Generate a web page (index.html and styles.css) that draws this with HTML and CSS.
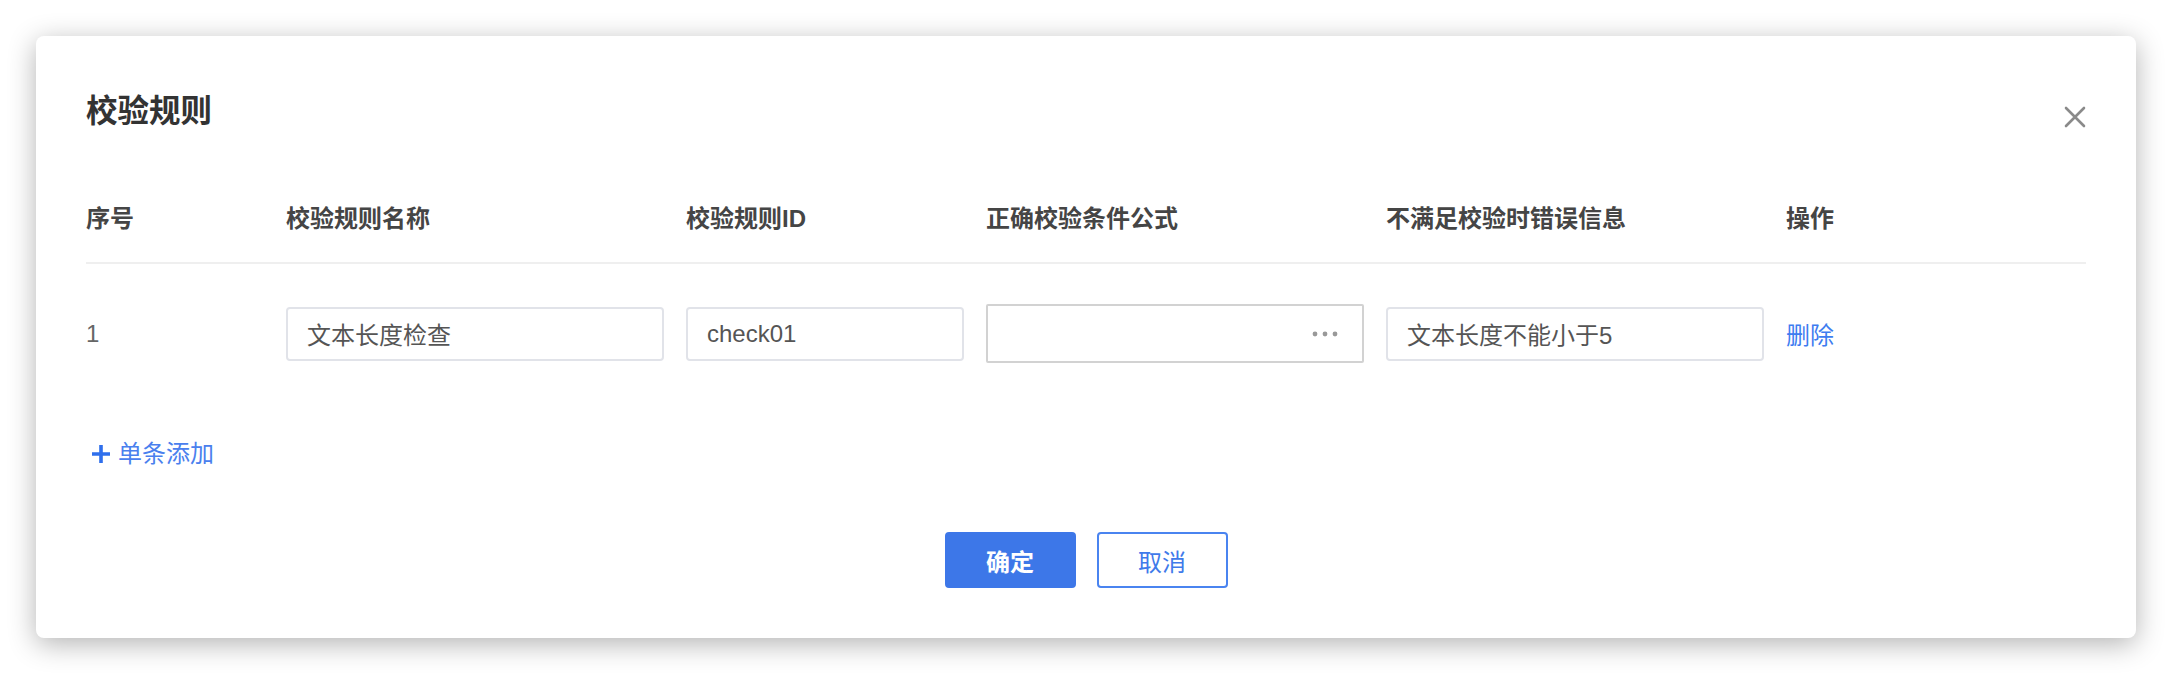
FILE: index.html
```html
<!DOCTYPE html>
<html lang="zh-CN">
<head>
    <meta charset="utf-8">
    <meta name="viewport" content="width=device-width, initial-scale=1">
    <title>校验规则</title>
    <link rel="stylesheet" href="styles.css">
</head>
<body>
    <div class="dialog">
        <div class="dialog-header">
            <h2 class="dialog-title">校验规则</h2>
            <button class="dialog-close" type="button" aria-label="关闭">
                <svg width="22" height="22" viewBox="0 0 22 22"><path d="M2 2L20 20M20 2L2 20" stroke="#8a8a8a" stroke-width="2.6" stroke-linecap="round"/></svg>
            </button>
        </div>

        <div class="rule-table">
            <div class="rule-row rule-head">
                <div>序号</div>
                <div>校验规则名称</div>
                <div>校验规则ID</div>
                <div>正确校验条件公式</div>
                <div>不满足校验时错误信息</div>
                <div>操作</div>
            </div>
            <div class="rule-row rule-body">
                <div class="rule-index">1</div>
                <input class="field" type="text" value="文本长度检查">
                <input class="field" type="text" value="check01">
                <div class="field formula">
                    <svg width="26" height="6" viewBox="0 0 26 6"><circle cx="3" cy="3" r="2.4" fill="#999"/><circle cx="13" cy="3" r="2.4" fill="#999"/><circle cx="23" cy="3" r="2.4" fill="#999"/></svg>
                </div>
                <input class="field" type="text" value="文本长度不能小于5">
                <a class="link" href="#">删除</a>
            </div>
        </div>

        <a class="add-link" href="#">
            <svg width="20" height="20" viewBox="0 0 20 20"><path d="M10 1V19M1 10H19" stroke="#2f6fec" stroke-width="3.6"/></svg>
            <span>单条添加</span>
        </a>

        <div class="dialog-footer">
            <button class="btn btn-primary" type="button">确定</button>
            <button class="btn btn-plain" type="button">取消</button>
        </div>
    </div>
</body>
</html>
```

FILE: styles.css
```css
body {
    margin: 0;
    padding: 36px;
    background-color: #fff;
    font-family: "Liberation Sans", "Noto Sans CJK SC", sans-serif;
    font-size: 24px;
    color: #333;
}
.dialog {
    background: #fff;
    border-radius: 8px;
    box-shadow: 0 6px 28px rgba(0,0,0,0.3);
    padding: 55px 50px 50px 50px;
}
.dialog-header {
    display: flex;
    justify-content: space-between;
    align-items: flex-start;
}
.dialog-title {
    margin: 0;
    font-size: 31.5px;
    line-height: 40px;
    font-weight: bold;
    color: #333;
}
.dialog-close {
    border: none;
    background: none;
    padding: 0;
    margin-top: 15px;
    width: 22px;
    height: 22px;
    cursor: pointer;
}
.dialog-close svg {
    display: block;
}
.rule-table {
    margin-top: 72px;
}
.rule-row {
    display: grid;
    grid-template-columns: 178px 378px 278px 378px 378px 1fr;
    column-gap: 22px;
    align-items: center;
}
.rule-head {
    line-height: 32px;
    font-weight: 600;
    color: #454545;
    padding-bottom: 27px;
    border-bottom: 2px solid #efefef;
}
.rule-body {
    padding-top: 40px;
}
.rule-index {
    color: #666;
}
.field {
    box-sizing: border-box;
    height: 54px;
    width: 100%;
    border: 2px solid #e1e3e9;
    border-radius: 4px;
    padding: 0 19px;
    font-family: inherit;
    font-size: 24px;
    color: #555;
    background: #fff;
    outline: none;
}
.formula {
    height: 59px;
    border-color: #d2d2d2;
    border-radius: 2px;
    display: flex;
    align-items: center;
    justify-content: flex-end;
    padding-right: 24px;
}
.link {
    color: #3d7cf0;
    text-decoration: none;
}
.add-link {
    display: inline-flex;
    align-items: center;
    gap: 7px;
    margin-top: 75px;
    margin-left: 5px;
    line-height: 32px;
    color: #4a80ee;
    text-decoration: none;
}
.add-link svg {
    display: block;
}
.dialog-footer {
    display: flex;
    justify-content: center;
    gap: 21px;
    margin-top: 62px;
}
.btn {
    box-sizing: border-box;
    height: 56px;
    width: 131px;
    border-radius: 4px;
    font-family: inherit;
    font-size: 24px;
    cursor: pointer;
}
.btn-primary {
    background-color: #3d77e8;
    border: 2px solid #3d77e8;
    color: #fff;
    font-weight: bold;
}
.btn-plain {
    background-color: #fff;
    border: 2px solid #4a84f0;
    color: #3f7aea;
}
```
